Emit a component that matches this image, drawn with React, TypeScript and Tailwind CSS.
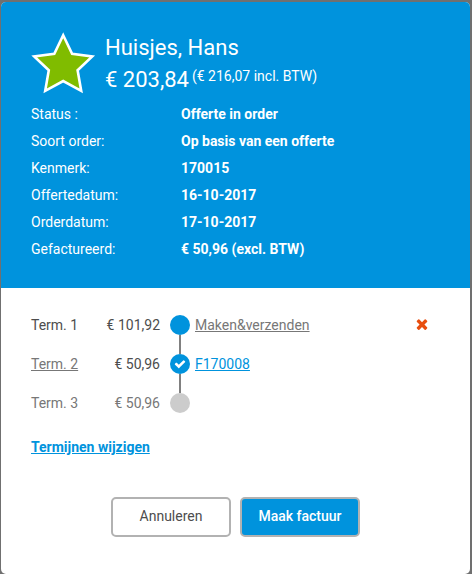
type Detail = {
  label: string;
  value: string;
};

type Term = {
  name: string;
  amount: string;
  state: "ready" | "invoiced" | "open";
  link?: string;
};

const details: Detail[] = [
  { label: "Status :", value: "Offerte in order" },
  { label: "Soort order:", value: "Op basis van een offerte" },
  { label: "Kenmerk:", value: "170015" },
  { label: "Offertedatum:", value: "16-10-2017" },
  { label: "Orderdatum:", value: "17-10-2017" },
  { label: "Gefactureerd:", value: "€ 50,96 (excl. BTW)" },
];

const terms: Term[] = [
  { name: "Term. 1", amount: "€ 101,92", state: "ready", link: "Maken&verzenden" },
  { name: "Term. 2", amount: "€ 50,96", state: "invoiced", link: "F170008" },
  { name: "Term. 3", amount: "€ 50,96", state: "open" },
];

function StarIcon() {
  return (
    <svg className="h-[64px] w-[66px] shrink-0" viewBox="0 0 66 64" aria-hidden="true">
      <path
        d="M33.2 4.2 L42.1 22.8 L62.2 25.4 L47.6 39.2 L51.2 59.8 L33.2 50.1 L15.2 59.8 L18.8 39.2 L4.2 25.4 L24.3 22.8 Z"
        fill="#80bc00"
        stroke="#fff"
        strokeWidth="2.6"
      />
    </svg>
  );
}

function CheckIcon() {
  return (
    <svg className="size-3" viewBox="0 0 1792 1792" fill="currentColor" aria-hidden="true">
      <path d="M1671 566q0 40-28 68l-724 724-136 136q-28 28-68 28t-68-28l-136-136-362-362q-28-28-28-68t28-68l136-136q28-28 68-28t68 28l294 295 656-657q28-28 68-28t68 28l136 136q28 28 28 68z" />
    </svg>
  );
}

function RemoveIcon() {
  return (
    <svg className="size-4" viewBox="0 0 1792 1792" fill="currentColor" aria-hidden="true">
      <path d="M1490 1322q0 40-28 68l-136 136q-28 28-68 28t-68-28l-294-294-294 294q-28 28-68 28t-68-28l-136-136q-28-28-28-68t28-68l294-294-294-294q-28-28-28-68t28-68l136-136q28-28 68-28t68 28l294 294 294-294q28-28 68-28t68 28l136 136q28 28 28 68t-28 68l-294 294 294 294q28 28 28 68z" />
    </svg>
  );
}

function TermRow({ term, last }: { term: Term; last: boolean }) {
  const open = term.state === "open";
  const invoiced = term.state === "invoiced";

  return (
    <div className={`flex h-[39px] items-start leading-5 ${open ? "text-[#777]" : "text-[#4d4d4d]"}`}>
      <span className={`w-[60px] ${invoiced ? "text-[#777] underline" : ""}`}>{term.name}</span>
      <span className="w-[69px] text-right">{term.amount}</span>
      <div className="ml-[10px] flex w-5 flex-col items-center">
        <span
          className={`flex size-5 items-center justify-center rounded-full text-white ${open ? "bg-[#ccc]" : "bg-[#0093dd]"}`}
        >
          {invoiced && <CheckIcon />}
        </span>
        {!last && <span className="h-[19px] w-0.5 bg-[#808080]" />}
      </div>
      {term.link && (
        <a href="#" className={`ml-[5px] underline ${invoiced ? "text-[#0093dd]" : "text-[#777]"}`}>
          {term.link}
        </a>
      )}
      {term.state === "ready" && (
        <button className="mt-px mr-[10px] ml-auto text-[#e84e0f]" aria-label="Verwijderen">
          <RemoveIcon />
        </button>
      )}
    </div>
  );
}

export default function App() {
  return (
    <div className="h-[574px] w-[472px] bg-[#707070] pt-0.5 pr-0.5 pl-px font-[Roboto,sans-serif] text-sm">
      <div className="flex h-full flex-col overflow-hidden rounded-[5px] bg-white">
        <header className="h-[286px] bg-[#0093dd] pt-[29px] pl-[29px] text-white">
          <div className="flex h-[70px]">
            <StarIcon />
            <div className="ml-[9px] pt-px text-[22px] leading-8">
              <h1>Huisjes, Hans</h1>
              <div className="flex">
                <span>€ 203,84</span>
                <span className="ml-[3px] text-sm leading-6">(€ 216,07 incl. BTW)</span>
              </div>
            </div>
          </div>
          <dl className="pl-px">
            {details.map((d) => (
              <div key={d.label} className="flex h-[27px] leading-[27px]">
                <dt className="w-[150px]">{d.label}</dt>
                <dd className="font-bold">{d.value}</dd>
              </div>
            ))}
          </dl>
        </header>

        <main className="px-[30px] pt-[27px]">
          {terms.map((term, i) => (
            <TermRow key={term.name} term={term} last={i === terms.length - 1} />
          ))}
          <a href="#" className="mt-[5px] block leading-5 font-bold text-[#0093dd] underline">
            Termijnen wijzigen
          </a>
          <div className="mt-10 flex justify-center gap-[9px]">
            <button className="h-10 w-[120px] rounded-[5px] border-2 border-[#b2b2b2] bg-white pb-0.5 text-[#4d4d4d]">
              Annuleren
            </button>
            <button className="h-10 w-[120px] rounded-[5px] border-2 border-[#b2b2b2] bg-[#0093dd] pb-0.5 font-medium text-white">
              Maak factuur
            </button>
          </div>
        </main>
      </div>
    </div>
  );
}
